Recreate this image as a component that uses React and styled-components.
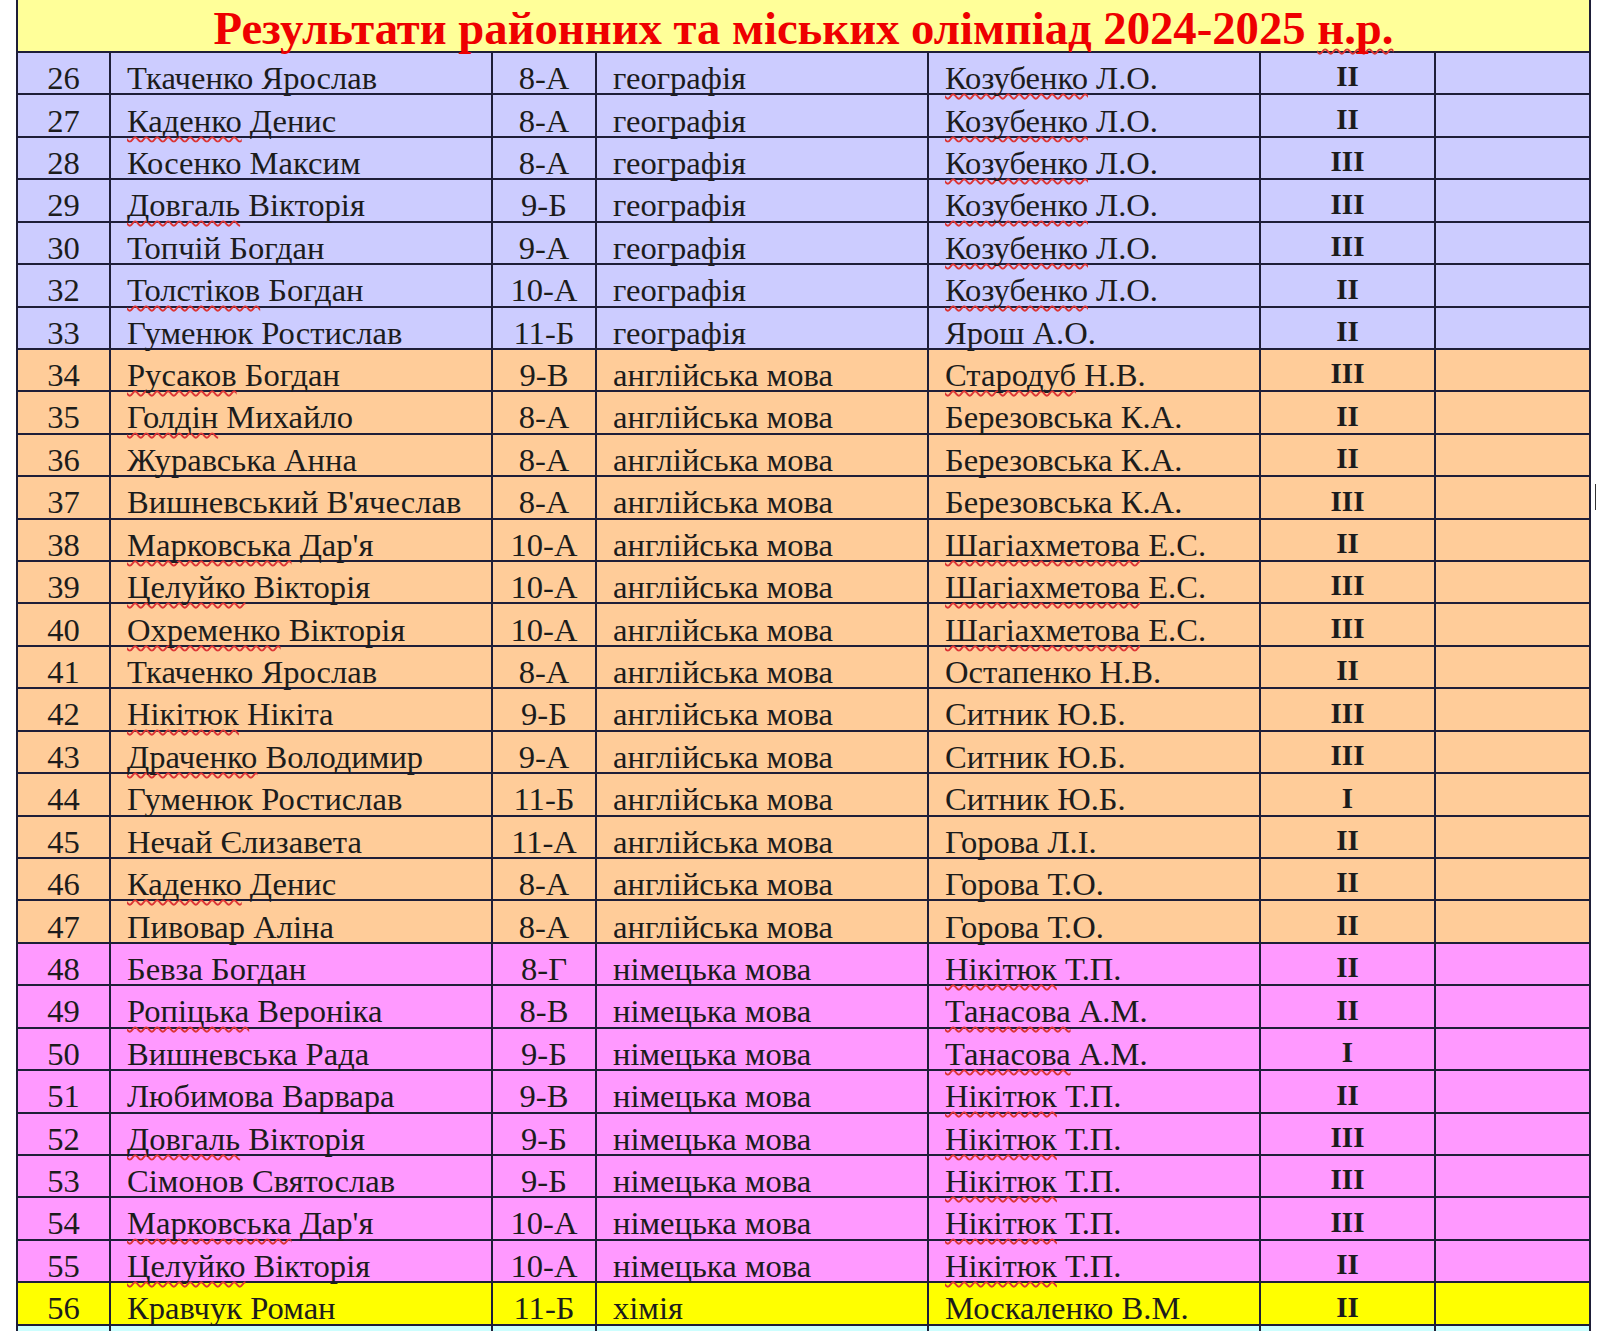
import React from 'react';
import styled, { createGlobalStyle } from 'styled-components';

const GlobalStyle = createGlobalStyle`
  html, body {
    margin: 0;
    padding: 0;
    background: #ffffff;
  }
  body {
    font-family: "Liberation Serif", "Times New Roman", serif;
    color: #1c1c1c;
  }
`;

const lineColor = '#1e1e38';
const columns = '93px 382px 104px 332px 332px 175px 157px';

const groupColors = {
  geo: '#ccccff',
  eng: '#ffcc99',
  ger: '#ff99ff',
  chem: '#ffff00',
  next: '#ccffff',
};

const Page = styled.div`
  position: relative;
  height: 1331px;
  overflow: hidden;
  padding-left: 16px;
`;

const Sheet = styled.div`
  width: 1575px;
  box-sizing: border-box;
  border-left: 2px solid ${lineColor};
  border-right: 2px solid ${lineColor};
`;

const TitleBar = styled.div`
  height: 53px;
  box-sizing: border-box;
  background: #ffff99;
  border-bottom: 2px solid ${lineColor};
  display: flex;
  align-items: flex-end;
  justify-content: center;
`;

const Title = styled.h1`
  margin: 0 0 -1px;
  font-size: 46.7px;
  line-height: 1;
  font-weight: bold;
  color: #ee0000;
  white-space: nowrap;
`;

const Row = styled.div`
  display: grid;
  grid-template-columns: ${columns};
  height: 42.43px;
  box-sizing: border-box;
  border-bottom: 2px solid ${lineColor};
  background: ${(p) => groupColors[p.$group]};
  margin-left: -2px;
  margin-right: -2px;
`;

const Cell = styled.div`
  display: flex;
  align-items: flex-end;
  justify-content: ${(p) => (p.$center ? 'center' : 'flex-start')};
  padding: 0 ${(p) => (p.$center ? '0' : '16px')};
  box-sizing: border-box;
  border-left: 2px solid ${lineColor};
  font-size: 32.6px;
  line-height: 0.9;
  white-space: nowrap;
  min-width: 0;

  &:last-child {
    border-right: 2px solid ${lineColor};
  }
`;

const RankCell = styled(Cell)`
  font-size: 29px;
  line-height: 1;
  font-weight: bold;
  padding-bottom: 2px;
`;

const Misspelled = styled.span`
  text-decoration: underline wavy #dc3434;
  text-decoration-thickness: 1.5px;
  text-underline-offset: 4px;
  text-decoration-skip-ink: none;
`;

const Caret = styled.div`
  position: absolute;
  left: 1595px;
  top: 484px;
  width: 1px;
  height: 26px;
  background: #333;
`;

const rows = [
  [26, 'Ткаченко Ярослав', '8-А', 'географія', '~Козубенко Л.О.', 'II', 'geo'],
  [27, '~Каденко Денис', '8-А', 'географія', '~Козубенко Л.О.', 'II', 'geo'],
  [28, 'Косенко Максим', '8-А', 'географія', '~Козубенко Л.О.', 'III', 'geo'],
  [29, '~Довгаль Вікторія', '9-Б', 'географія', '~Козубенко Л.О.', 'III', 'geo'],
  [30, 'Топчій Богдан', '9-А', 'географія', '~Козубенко Л.О.', 'III', 'geo'],
  [32, '~Толстіков Богдан', '10-А', 'географія', '~Козубенко Л.О.', 'II', 'geo'],
  [33, 'Гуменюк Ростислав', '11-Б', 'географія', 'Ярош А.О.', 'II', 'geo'],
  [34, '~Русаков Богдан', '9-В', 'англійська мова', '~Стародуб Н.В.', 'III', 'eng'],
  [35, '~Голдін Михайло', '8-А', 'англійська мова', 'Березовська К.А.', 'II', 'eng'],
  [36, 'Журавська Анна', '8-А', 'англійська мова', 'Березовська К.А.', 'II', 'eng'],
  [37, "Вишневський В'ячеслав", '8-А', 'англійська мова', 'Березовська К.А.', 'III', 'eng'],
  [38, "~Марковська Дар'я", '10-А', 'англійська мова', '~Шагіахметова Е.С.', 'II', 'eng'],
  [39, '~Целуйко Вікторія', '10-А', 'англійська мова', '~Шагіахметова Е.С.', 'III', 'eng'],
  [40, '~Охременко Вікторія', '10-А', 'англійська мова', '~Шагіахметова Е.С.', 'III', 'eng'],
  [41, 'Ткаченко Ярослав', '8-А', 'англійська мова', 'Остапенко Н.В.', 'II', 'eng'],
  [42, '~Нікітюк Нікіта', '9-Б', 'англійська мова', 'Ситник Ю.Б.', 'III', 'eng'],
  [43, '~Драченко Володимир', '9-А', 'англійська мова', 'Ситник Ю.Б.', 'III', 'eng'],
  [44, 'Гуменюк Ростислав', '11-Б', 'англійська мова', 'Ситник Ю.Б.', 'I', 'eng'],
  [45, 'Нечай Єлизавета', '11-А', 'англійська мова', 'Горова Л.І.', 'II', 'eng'],
  [46, '~Каденко Денис', '8-А', 'англійська мова', 'Горова Т.О.', 'II', 'eng'],
  [47, 'Пивовар Аліна', '8-А', 'англійська мова', 'Горова Т.О.', 'II', 'eng'],
  [48, 'Бевза Богдан', '8-Г', 'німецька мова', '~Нікітюк Т.П.', 'II', 'ger'],
  [49, '~Ропіцька Вероніка', '8-В', 'німецька мова', '~Танасова А.М.', 'II', 'ger'],
  [50, 'Вишневська Рада', '9-Б', 'німецька мова', '~Танасова А.М.', 'I', 'ger'],
  [51, 'Любимова Варвара', '9-В', 'німецька мова', '~Нікітюк Т.П.', 'II', 'ger'],
  [52, '~Довгаль Вікторія', '9-Б', 'німецька мова', '~Нікітюк Т.П.', 'III', 'ger'],
  [53, 'Сімонов Святослав', '9-Б', 'німецька мова', '~Нікітюк Т.П.', 'III', 'ger'],
  [54, "~Марковська Дар'я", '10-А', 'німецька мова', '~Нікітюк Т.П.', 'III', 'ger'],
  [55, '~Целуйко Вікторія', '10-А', 'німецька мова', '~Нікітюк Т.П.', 'II', 'ger'],
  [56, 'Кравчук Роман', '11-Б', 'хімія', 'Москаленко В.М.', 'II', 'chem'],
];

// "~" in front means the first word carries the spell-check squiggle
const SpellText = ({ value }) => {
  if (!value.startsWith('~')) return <span>{value}</span>;
  const [first, ...rest] = value.slice(1).split(' ');
  return (
    <span>
      <Misspelled>{first}</Misspelled>
      {rest.length ? ' ' + rest.join(' ') : ''}
    </span>
  );
};

const App = () => (
  <>
    <GlobalStyle />
    <Page>
      <Sheet>
        <TitleBar>
          <Title>
            Результати районних та міських олімпіад 2024-2025 <Misspelled>н.р.</Misspelled>
          </Title>
        </TitleBar>
        {rows.map(([num, name, cls, subject, teacher, rank, group]) => (
          <Row key={num} $group={group}>
            <Cell $center>{num}</Cell>
            <Cell><SpellText value={name} /></Cell>
            <Cell $center>{cls}</Cell>
            <Cell>{subject}</Cell>
            <Cell><SpellText value={teacher} /></Cell>
            <RankCell $center>{rank}</RankCell>
            <Cell />
          </Row>
        ))}
        <Row $group="next">
          <Cell />
          <Cell />
          <Cell />
          <Cell />
          <Cell />
          <Cell />
          <Cell />
        </Row>
      </Sheet>
      <Caret />
    </Page>
  </>
);

export default App;
